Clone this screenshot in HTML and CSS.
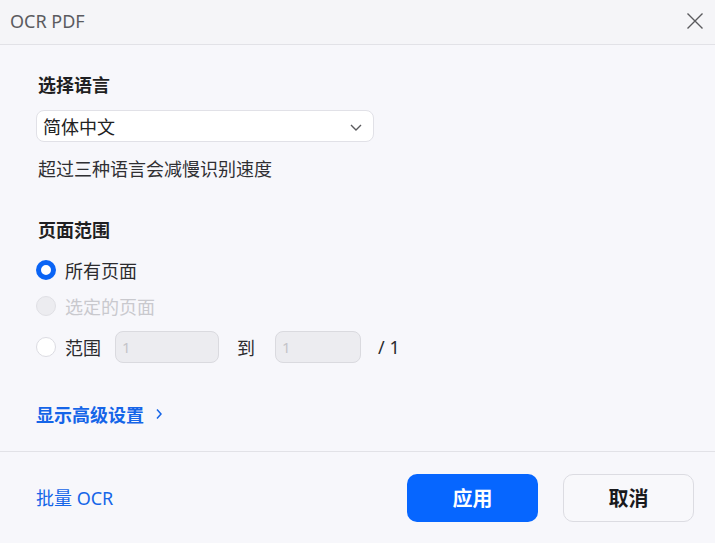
FILE: index.html
```html
<!DOCTYPE html>
<html lang="zh-CN">
<head>
<meta charset="utf-8">
<title>OCR PDF</title>
<link rel="stylesheet" href="styles.css">
</head>
<body>
<div class="dialog">
  <header class="header">
    <span class="title">OCR PDF</span>
    <button class="close" aria-label="关闭">
      <svg width="18" height="18" viewBox="0 0 18 18"><path d="M1.5 1.5L16.5 16.5M16.5 1.5L1.5 16.5" stroke="#5a5a5e" stroke-width="1.4" fill="none"/></svg>
    </button>
  </header>
  <main class="content">
    <h2 class="heading">选择语言</h2>
    <div class="select">
      <span>简体中文</span>
      <svg class="chev" width="12" height="7" viewBox="0 0 12 7"><path d="M1 1L6 6L11 1" stroke="#5a5a5e" stroke-width="1.4" fill="none"/></svg>
    </div>
    <p class="hint">超过三种语言会减慢识别速度</p>

    <h2 class="heading heading-range">页面范围</h2>
    <div class="radios">
      <label class="radio-row">
        <span class="radio checked"></span>
        <span>所有页面</span>
      </label>
      <label class="radio-row disabled">
        <span class="radio"></span>
        <span>选定的页面</span>
      </label>
      <div class="radio-row range">
        <span class="radio"></span>
        <span class="range-label">范围</span>
        <span class="num num-from">1</span>
        <span class="to">到</span>
        <span class="num num-to">1</span>
        <span class="total">/ 1</span>
      </div>
    </div>

    <a class="advanced">显示高级设置
      <svg width="8" height="12" viewBox="0 0 8 12"><path d="M2 1.5L6 6L2 10.5" stroke="#1565e8" stroke-width="1.5" fill="none"/></svg>
    </a>
  </main>
  <footer class="footer">
    <a class="batch">批量 OCR</a>
    <div class="actions">
      <button class="btn btn-primary">应用</button>
      <button class="btn btn-secondary">取消</button>
    </div>
  </footer>
</div>
</body>
</html>
```

FILE: styles.css
```css
* { box-sizing: border-box; }
html, body {
  margin: 0;
  padding: 0;
  width: 715px;
  height: 543px;
  overflow: hidden;
  background: #f7f7fb;
  font-family: "Noto Sans", "Noto Sans CJK SC", sans-serif;
  color: #2b2b2e;
}
.dialog {
  width: 715px;
  height: 543px;
  display: flex;
  flex-direction: column;
}
.header {
  height: 45px;
  flex: none;
  display: flex;
  align-items: center;
  justify-content: space-between;
  padding: 0 11px 0 10px;
  background: #f5f5f8;
  border-bottom: 1px solid #e2e2e7;
}
.title {
  font-size: 18px;
  color: #5b5b60;
  line-height: 24px;
  margin-top: -2px;
}
.close {
  border: 0;
  background: none;
  padding: 0;
  width: 18px;
  height: 18px;
  margin-top: -2px;
  display: flex;
}
.content {
  flex: 1;
  padding: 27px 0 0 36px;
  display: flex;
  flex-direction: column;
  align-items: flex-start;
  font-family: "Noto Sans CJK SC", sans-serif;
}
.heading {
  margin: 0 0 0 2px;
  font-size: 18px;
  font-weight: 700;
  line-height: 24px;
  color: #1f1f22;
}
.select {
  margin-top: 14px;
  width: 338px;
  height: 32px;
  background: #fff;
  border: 1px solid #e1e1e7;
  border-radius: 8px;
  display: flex;
  align-items: center;
  justify-content: space-between;
  padding: 0 11px 0 6px;
  font-size: 18px;
  color: #222;
  line-height: 24px;
}
.chev { margin-top: 2px; }
.hint {
  margin: 14px 0 0 2px;
  font-size: 18px;
  line-height: 24px;
  color: #2f2f33;
}
.heading-range { margin-top: 37px; }
.radios {
  margin-top: 17px;
  display: flex;
  flex-direction: column;
  gap: 12px;
}
.radio-row {
  display: flex;
  align-items: center;
  height: 24px;
  font-size: 18px;
  line-height: 24px;
  color: #2b2b2e;
}
.radio {
  width: 20px;
  height: 20px;
  border-radius: 50%;
  background: #fff;
  border: 1px solid #dcdce2;
  margin-right: 9px;
  flex: none;
}
.radio.checked {
  border: 5.5px solid #0a64f5;
}
.disabled { color: #c9c9ce; }
.disabled .radio {
  background: #ececf0;
  border-color: #e0e0e5;
}
.radio-row.range {
  height: 32px;
  margin-top: 1px;
}
.num {
  height: 32px;
  background: #ececf0;
  border: 1px solid #dadadf;
  border-radius: 8px;
  padding-left: 6px;
  display: flex;
  align-items: center;
  color: #c4c4c9;
  font-family: "Noto Sans", sans-serif;
  font-size: 15px;
}
.range-label { width: 50px; }
.num-from { width: 104px; }
.to { margin: 0 20px 0 18px; }
.num-to { width: 86px; }
.total {
  margin-left: 17px;
  font-family: "Noto Sans", sans-serif;
  font-size: 18px;
}
.advanced {
  margin-top: 39px;
  display: flex;
  align-items: center;
  gap: 11px;
  font-size: 18px;
  font-weight: 700;
  line-height: 24px;
  color: #1565e8;
}
.footer {
  height: 92px;
  flex: none;
  border-top: 1px solid #e2e2e7;
  display: flex;
  align-items: center;
  justify-content: space-between;
  padding: 0 21px 0 36px;
  font-family: "Noto Sans", "Noto Sans CJK SC", sans-serif;
}
.batch {
  font-size: 18px;
  line-height: 24px;
  color: #1565e8;
}
.actions {
  display: flex;
  gap: 25px;
}
.btn {
  width: 131px;
  height: 48px;
  border-radius: 10px;
  font-family: "Noto Sans CJK SC", sans-serif;
  font-size: 20px;
  font-weight: 700;
  padding: 0;
}
.btn-primary {
  background: #0666ff;
  color: #fff;
  border: 0;
}
.btn-secondary {
  background: #f8f8fb;
  color: #1a1a1c;
  border: 1px solid #dcdce2;
}
```
